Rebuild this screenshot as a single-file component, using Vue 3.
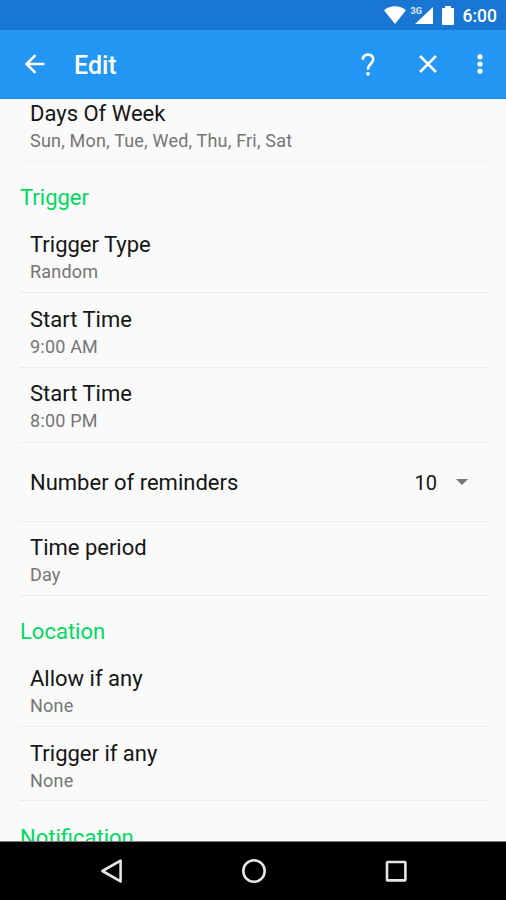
<script setup>
import {ref} from "vue";

const reminders = ref(10)

const sections = ref([
  {
    rows: [
      {title: "Days Of Week", summary: "Sun, Mon, Tue, Wed, Thu, Fri, Sat"},
    ]
  },
  {
    name: "Trigger",
    rows: [
      {title: "Trigger Type", summary: "Random"},
      {title: "Start Time", summary: "9:00 AM"},
      {title: "Start Time", summary: "8:00 PM", tight: true},
      {title: "Number of reminders", spinner: true},
      {title: "Time period", summary: "Day", short: true, tight: true},
    ]
  },
  {
    name: "Location",
    rows: [
      {title: "Allow if any", summary: "None"},
      {title: "Trigger if any", summary: "None", short: true},
    ]
  },
  {
    name: "Notification",
    rows: []
  },
])
</script>

<template>
  <div class="screen">

    <div class="status_bar">
      <svg class="wifi" width="22" height="18" viewBox="0 0 22 18">
        <path d="M0 4.2C6 -1 16 -1 22 4.2L11 18Z"/>
      </svg>
      <div class="signal">
        <span class="network">3G</span>
        <svg width="18" height="17" viewBox="0 0 18 17">
          <path d="M18 0V17H0Z"/>
        </svg>
      </div>
      <svg class="battery" width="12" height="19" viewBox="0 0 12 19">
        <path d="M3 0H9V2H11Q12 2 12 3V18Q12 19 11 19H1Q0 19 0 18V3Q0 2 1 2H3Z"/>
      </svg>
      <span class="clock">6:00</span>
    </div>

    <div class="toolbar">
      <svg class="back" width="20" height="20" viewBox="0 0 20 20">
        <path d="M19.5 10H2M10.4 1.2L1.6 10L10.4 18.8"/>
      </svg>
      <div class="heading">Edit</div>
      <svg class="help" width="14" height="23" viewBox="0 0 14 23">
        <path d="M1.8 6.8C1.8 3.6 3.8 1.6 7 1.6S12.2 3.5 12.2 6.5C12.2 10.4 7 10.8 7 16.4"/>
        <circle cx="7" cy="20.8" r="1.9"/>
      </svg>
      <svg class="close" width="18" height="18" viewBox="0 0 18 18">
        <path d="M1 1L17 17M17 1L1 17"/>
      </svg>
      <svg class="more" width="6" height="20" viewBox="0 0 6 20">
        <circle cx="3" cy="2.8" r="2.6"/>
        <circle cx="3" cy="10" r="2.6"/>
        <circle cx="3" cy="17.2" r="2.6"/>
      </svg>
    </div>

    <div class="content">
      <div class="list">
        <div v-for="(section, i) in sections" :key="i" class="section">
          <div v-if="section.name" class="section_name">{{ section.name }}</div>

          <div v-for="(row, j) in section.rows" :key="j" class="row" :class="{spinner_row: row.spinner, short: row.short, tight: row.tight}">
            <div class="title">{{ row.title }}</div>
            <div v-if="row.summary" class="summary">{{ row.summary }}</div>
            <div v-if="row.spinner" class="spinner">
              <span>{{ reminders }}</span>
              <svg width="12" height="8" viewBox="0 0 12 8">
                <path d="M0 0H12L6 6Z"/>
              </svg>
            </div>
          </div>
        </div>
      </div>
    </div>

    <div class="nav_bar">
      <svg width="24" height="26" viewBox="0 0 24 26">
        <path d="M20.6 2.6V23.4L2.4 13Z"/>
      </svg>
      <svg width="24" height="26" viewBox="0 0 24 26">
        <circle cx="12" cy="13" r="10.7"/>
      </svg>
      <svg width="24" height="26" viewBox="0 0 24 26">
        <rect x="3" y="4" width="18.4" height="18.4" rx="0.6"/>
      </svg>
    </div>

  </div>
</template>

<style>
body {
  margin: 0;
}
</style>

<style scoped>
.screen {
  display: flex;
  flex-flow: column nowrap;
  width: 100%;
  height: 900px;
  overflow: hidden;
  background-color: #fafafa;
  font-family: Roboto, sans-serif;
}

.status_bar {
  display: flex;
  flex: none;
  justify-content: flex-end;
  align-items: center;
  box-sizing: border-box;
  height: 30px;
  padding-right: 9px;
  background-color: #1976d2;
  color: #fff;
  fill: #fff;
}

.signal {
  display: flex;
  position: relative;
  margin-left: 9px;
}

.network {
  position: absolute;
  left: -4px;
  top: -2px;
  font-size: 9px;
  line-height: 12px;
  font-weight: 700;
  opacity: 0.85;
}

.battery {
  margin-left: 9px;
}

.clock {
  margin-left: 9px;
  padding-top: 2px;
  font-size: 17.5px;
  font-weight: 500;
  line-height: 28px;
}

.toolbar {
  display: flex;
  flex: none;
  align-items: center;
  box-sizing: border-box;
  height: 69px;
  padding: 0 23px 0 25px;
  border-bottom: 1px solid #1e88e5;
  background-color: #2196f3;
  color: #fff;
}

.back, .close, .help {
  fill: none;
  stroke: #fff;
  stroke-width: 2.6;
}

.help circle, .more {
  fill: #fff;
  stroke: none;
}

.heading {
  flex: 1;
  margin-left: 29px;
  padding-top: 3px;
  font-size: 25px;
  font-weight: 500;
}

.close {
  margin-left: 44px;
}

.more {
  margin-left: 40px;
}

.content {
  flex: 1;
  min-height: 0;
  overflow: hidden;
}

/* list is scrolled a little, first row sits under the toolbar */
.list {
  margin-top: -12px;
  padding: 0 16px 0 20px;
}

.section_name {
  box-sizing: border-box;
  height: 56px;
  padding-top: 23px;
  color: #00d95f;
  font-size: 22px;
  line-height: 26px;
}

.section:last-child .section_name {
  padding-top: 24px;
}

.row {
  box-sizing: border-box;
  height: 75px;
  padding: 14px 10px 0;
  border-bottom: 1px solid #ededed;
}

.section:first-child .row {
  border-color: #f3f3f3;
}

.short {
  height: 74px;
}

.tight {
  padding-top: 13px;
}

.title {
  color: #151515;
  font-size: 22px;
  line-height: 26px;
}

.summary {
  margin-top: 3px;
  color: #757575;
  font-size: 18px;
  line-height: 22px;
  letter-spacing: 0.2px;
}

.spinner_row {
  display: flex;
  justify-content: space-between;
  align-items: center;
  height: 79px;
  padding: 1px 22px 0 10px;
}

.spinner {
  display: flex;
  align-items: center;
  gap: 19px;
  color: #151515;
  font-size: 20px;
}

.spinner svg {
  fill: #757575;
}

.nav_bar {
  display: flex;
  flex: none;
  justify-content: center;
  align-items: center;
  gap: 118px;
  box-sizing: border-box;
  height: 59px;
  padding-left: 1px;
  border-top: 1px solid #7d7d7d;
  background-color: #000;
}

.nav_bar svg {
  fill: none;
  stroke: #e6e6e6;
  stroke-width: 2.6;
  stroke-linejoin: round;
}
</style>
